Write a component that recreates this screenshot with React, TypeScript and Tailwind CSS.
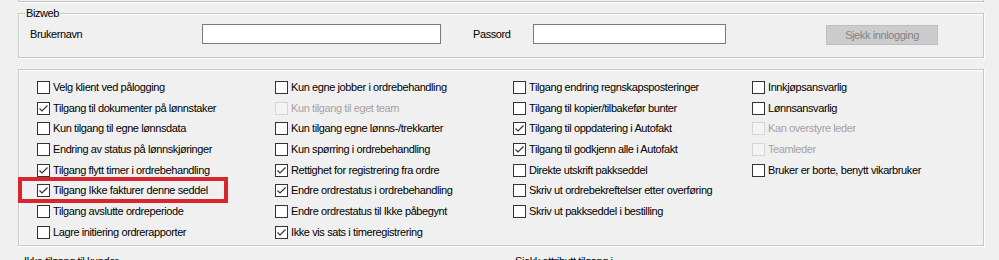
import React from "react";

type Item = { label: string; checked?: boolean; disabled?: boolean };

const columns: Item[][] = [
  [
    { label: "Velg klient ved pålogging" },
    { label: "Tilgang til dokumenter på lønnstaker", checked: true },
    { label: "Kun tilgang til egne lønnsdata" },
    { label: "Endring av status på lønnskjøringer" },
    { label: "Tilgang flytt timer i ordrebehandling", checked: true },
    { label: "Tilgang Ikke fakturer denne seddel", checked: true },
    { label: "Tilgang avslutte ordreperiode" },
    { label: "Lagre initiering ordrerapporter" },
  ],
  [
    { label: "Kun egne jobber i ordrebehandling" },
    { label: "Kun tilgang til eget team", disabled: true },
    { label: "Kun tilgang egne lønns-/trekkarter" },
    { label: "Kun spørring i ordrebehandling" },
    { label: "Rettighet for registrering fra ordre", checked: true },
    { label: "Endre ordrestatus i ordrebehandling", checked: true },
    { label: "Endre ordrestatus til Ikke påbegynt" },
    { label: "Ikke vis sats i timeregistrering", checked: true },
  ],
  [
    { label: "Tilgang endring regnskapsposteringer" },
    { label: "Tilgang til kopier/tilbakefør bunter" },
    { label: "Tilgang til oppdatering i Autofakt", checked: true },
    { label: "Tilgang til godkjenn alle i Autofakt", checked: true },
    { label: "Direkte utskrift pakkseddel" },
    { label: "Skriv ut ordrebekreftelser etter overføring" },
    { label: "Skriv ut pakkseddel i bestilling" },
  ],
  [
    { label: "Innkjøpsansvarlig" },
    { label: "Lønnsansvarlig" },
    { label: "Kan overstyre leder", disabled: true },
    { label: "Teamleder", disabled: true },
    { label: "Bruker er borte, benytt vikarbruker" },
  ],
];

function CheckRow({ item }: { item: Item }) {
  return (
    <div className="flex h-[20.7px] items-center gap-[3px]">
      <span
        className={
          "flex h-[13px] w-[13px] shrink-0 items-center justify-center border " +
          (item.disabled ? "border-[#d6d6d6] bg-[#f4f4f4]" : "border-[#333333] bg-white")
        }
      >
        {item.checked && (
          <svg width="11" height="11" viewBox="0 0 11 11">
            <polyline points="1.5,5.5 4,8 9.5,2.5" fill="none" stroke="#333" strokeWidth="1.2" />
          </svg>
        )}
      </span>
      <span className={"whitespace-nowrap " + (item.disabled ? "text-[#a3a3a3]" : "text-black")}>
        {item.label}
      </span>
    </div>
  );
}

export default function App() {
  return (
    <div
      className="relative h-[260px] w-[999px] overflow-hidden bg-[#f0f0f0] text-[11px] leading-[13px] tracking-[-0.4px] text-black"
      style={{ fontFamily: '"Liberation Sans", Arial, sans-serif' }}
    >
      {/* bottom edge of the group above */}
      <div className="ml-[18px] h-[2px] w-[966px] border-x border-b border-[#c4c4c4] shadow-[0_1px_0_#fff]" />

      {/* Bizweb group */}
      <div className="relative ml-[18px] mt-[11px] h-[45px] w-[966px] border border-[#c8c8c8] shadow-[inset_1px_1px_0_#fff,1px_1px_0_#fff]">
        <span className="absolute -top-[7px] left-[6px] bg-[#f0f0f0] px-[1px]">Bizweb</span>
        <div className="flex items-center pt-[9px]">
          <span className="ml-[11px] w-[172px]">Brukernavn</span>
          <div className="h-[20px] w-[239px] border border-[#7a7a7a] bg-white" />
          <span className="ml-[32px] w-[60px]">Passord</span>
          <div className="h-[20px] w-[193px] border border-[#7a7a7a] bg-white" />
          <div className="ml-[100px] mt-[2px] flex h-[20px] w-[112px] items-center justify-center border border-[#bfbfbf] bg-[#cccccc] text-[#838383]">
            Sjekk innlogging
          </div>
        </div>
      </div>

      {/* Rights group */}
      <div className="ml-[18px] mt-[11px] h-[177px] w-[966px] border border-[#c8c8c8] pl-[18px] pt-[7px] shadow-[inset_1px_1px_0_#fff,1px_1px_0_#fff]">
        <div className="grid grid-cols-[238px_238px_239px_1fr]">
          {columns.map((col, i) => (
            <div key={i} className="flex flex-col">
              {col.map((item) => (
                <CheckRow key={item.label} item={item} />
              ))}
            </div>
          ))}
        </div>
      </div>

      {/* next row, cut off by the window edge */}
      <div className="mt-[9px] grid grid-cols-[491px_1fr] pl-[24px]">
        <span>Ikke tilgang til kunder</span>
        <span>Sjekk attributt tilgang i</span>
      </div>

      {/* red highlight annotation */}
      <div className="absolute left-[18px] top-[177px] h-[26px] w-[210px] border-[4px] border-[#d7262d]" />
    </div>
  );
}
